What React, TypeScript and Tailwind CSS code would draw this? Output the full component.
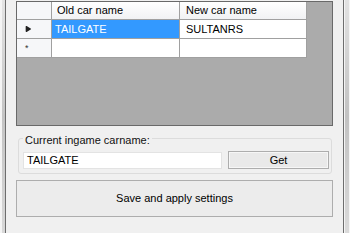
import { Play } from 'lucide-react'

const rows = [
  { old: 'TAILGATE', next: 'SULTANRS', current: true },
  { old: '', next: '', current: false, isNew: true },
]

function WindowEdge({ side }: { side: 'left' | 'right' }) {
  if (side === 'left') {
    return (
      <div className="flex h-full w-[6px] shrink-0">
        <div className="w-[2px] bg-[#f4f4f4]" />
        <div className="w-[3px] bg-gradient-to-b from-[#e4e4e4] via-[#c4c4c4] to-[#d8d8d8]" />
        <div className="w-px bg-[#6d6d6d]" />
      </div>
    )
  }
  return (
    <div className="flex h-full w-[7px] shrink-0">
      <div className="w-px bg-[#6d6d6d]" />
      <div className="w-px bg-[#f4f4f4]" />
      <div className="w-[4px] bg-gradient-to-b from-[#e2e2e2] via-[#c2c2c2] to-[#dadada]" />
      <div className="w-px bg-[#f4f4f4]" />
    </div>
  )
}

function CarGrid() {
  return (
    <div className="mt-px h-[125px] border border-[#696969] bg-[#ababab]">
      <div className="w-[290px]">
        {/* column headers */}
        <div className="flex h-[18px] border-b border-[#a0a0a0]">
          <div className="w-[35px] border-r border-[#a0a0a0] bg-[#f6f7f9]" />
          <div className="flex w-[128px] items-center border-r border-[#a0a0a0] bg-gradient-to-b from-white to-[#f1f2f4] pl-[5px] text-black">
            Old car name
          </div>
          <div className="flex w-[127px] items-center border-r border-[#a0a0a0] bg-gradient-to-b from-white to-[#f1f2f4] pl-[6px] text-black">
            New car name
          </div>
        </div>

        {rows.map((row, i) => (
          <div key={i} className="flex h-[19px] border-b border-[#a0a0a0]">
            <div className="flex w-[35px] items-center border-r border-[#a0a0a0] bg-[#f6f7f9] pl-[7px]">
              {row.current && <Play className="h-[8px] w-[8px] fill-[#222] text-[#222]" strokeWidth={0} />}
              {row.isNew && <span className="pl-px text-[9px] leading-none text-[#333]">*</span>}
            </div>
            <div
              className={
                row.current
                  ? 'flex w-[128px] items-center border-r border-[#a0a0a0] bg-[#3399ff] pl-[3px] text-white'
                  : 'flex w-[128px] items-center border-r border-[#a0a0a0] bg-white pl-[3px]'
              }
            >
              {row.old}
            </div>
            <div className="flex w-[127px] items-center border-r border-[#a0a0a0] bg-white pl-[6px] text-black">
              {row.next}
            </div>
          </div>
        ))}
      </div>
    </div>
  )
}

export default function App() {
  return (
    <div
      className="flex h-[233px] w-[350px] overflow-hidden bg-[#f0f0f0] text-[11px] leading-none text-black"
      style={{ fontFamily: '"Liberation Sans", Arial, sans-serif' }}
    >
      <WindowEdge side="left" />

      <div className="flex flex-1 flex-col px-[10px]">
        <CarGrid />

        {/* current carname group */}
        <div className="relative ml-[2px] mr-px mt-[12px] h-[36px] rounded-[3px] border border-[#dcdcdc]">
          <span className="absolute -top-[4px] left-[4px] bg-[#f0f0f0] px-[2px] text-[#111]">
            Current ingame carname:
          </span>
          <div className="flex items-center gap-[6px] pl-[4px] pt-[12px]">
            <div className="flex h-[17px] w-[199px] items-center border border-[#e3e3e3] bg-white pl-[3px]">
              TAILGATE
            </div>
            <button
              type="button"
              className="flex h-[18px] w-[101px] items-center justify-center border border-[#adadad] bg-[#e9e9e9] shadow-[inset_0_0_0_1px_#f6f6f6]"
            >
              Get
            </button>
          </div>
        </div>

        <button
          type="button"
          className="mt-[6px] flex h-[37px] w-full items-center justify-center border border-[#adadad] bg-[#ececec]"
        >
          Save and apply settings
        </button>
      </div>

      <WindowEdge side="right" />
    </div>
  )
}
